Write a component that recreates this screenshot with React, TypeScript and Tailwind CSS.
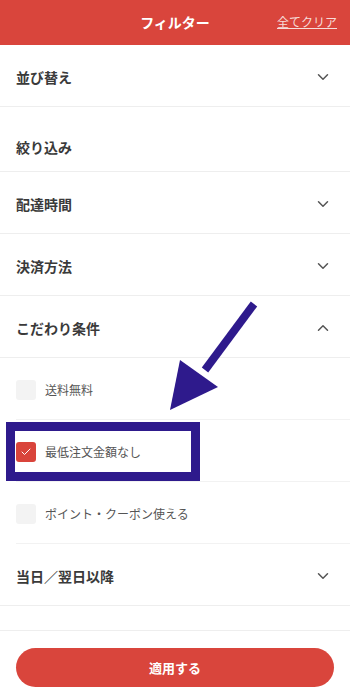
import React, { useState } from 'react';
import { ChevronDown, ChevronUp, Check } from 'lucide-react';

const font = { fontFamily: "'Noto Sans CJK JP', 'Noto Sans', sans-serif" };

const SectionRow: React.FC<{ label: string; open?: boolean; chevron?: boolean; tall?: boolean }> = ({ label, open, chevron = true, tall }) => (
  <div className={`flex items-center justify-between px-4 border-b border-[#eeeeee] ${tall ? 'h-[65px] pt-[16px]' : 'h-[62px] pt-[3px]'}`}>
    <span className="text-[14px] font-bold text-[#3a3a3a]">{label}</span>
    {chevron && (open ? <ChevronUp size={18} strokeWidth={2} className="text-[#555555] mr-[2px]" /> : <ChevronDown size={18} strokeWidth={2} className="text-[#555555] mr-[2px]" />)}
  </div>
);

const CheckRow: React.FC<{ label: string; checked: boolean; onToggle: () => void; last?: boolean }> = ({ label, checked, onToggle, last }) => (
  <div className="pl-4 h-[62px]">
    <button onClick={onToggle} className={`w-full h-full flex items-center gap-[9px] border-b pt-[2px] ${last ? 'border-[#eeeeee]' : 'border-[#f2f2f2]'}`}>
      <span className={`w-5 h-5 rounded-[3px] flex items-center justify-center ${checked ? 'bg-[#d9443b]' : 'bg-[#f3f3f3]'}`}>
        {checked && <Check size={12} strokeWidth={2} className="text-white" />}
      </span>
      <span className="text-[12px] text-[#555555]">{label}</span>
    </button>
  </div>
);

const App: React.FC = () => {
  const [checks, setChecks] = useState({ free: false, minimum: true, point: false });

  return (
    <div className="relative w-[350px] h-[691px] bg-white overflow-hidden flex flex-col" style={font}>
      {/* Header */}
      <div className="h-[45px] bg-[#d9453c] flex items-center justify-center relative shrink-0">
        <span className="text-white text-[14px] font-bold">フィルター</span>
        <button className="absolute right-[13px] top-[16px] text-[12px] text-[#f6dcd9] underline leading-none">全てクリア</button>
      </div>

      <SectionRow label="並び替え" />
      <SectionRow label="絞り込み" chevron={false} tall />
      <SectionRow label="配達時間" />
      <SectionRow label="決済方法" />
      <SectionRow label="こだわり条件" open />

      <CheckRow label="送料無料" checked={checks.free} onToggle={() => setChecks(p => ({ ...p, free: !p.free }))} />
      <CheckRow label="最低注文金額なし" checked={checks.minimum} onToggle={() => setChecks(p => ({ ...p, minimum: !p.minimum }))} />
      <CheckRow label="ポイント・クーポン使える" checked={checks.point} onToggle={() => setChecks(p => ({ ...p, point: !p.point }))} />

      <SectionRow label="当日／翌日以降" />
      <div className="h-[25px] border-b border-[#eeeeee] shrink-0" />

      <div className="flex-1 px-4 pt-[17px]">
        <button className="w-full h-[39px] rounded-full bg-[#d9453c] text-white text-[13px] font-bold">適用する</button>
      </div>

      {/* annotation overlay */}
      <div className="absolute left-[6px] top-[422px] w-[194px] h-[59px] border-[9px] border-[#2e1a8c] pointer-events-none" />
      <svg className="absolute left-0 top-0 pointer-events-none" width="350" height="691" viewBox="0 0 350 691">
        <line x1="254" y1="304" x2="205" y2="370" stroke="#2e1a8c" strokeWidth="8" />
        <polygon points="180,360 218,387 170,410" fill="#2e1a8c" />
      </svg>
    </div>
  );
};

export default App;
